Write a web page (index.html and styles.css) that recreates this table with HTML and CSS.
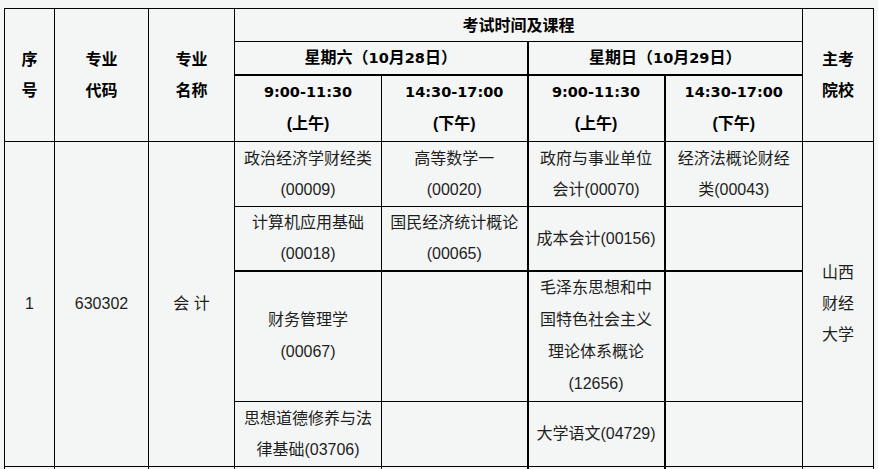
FILE: index.html
```html
<!DOCTYPE html>
<html lang="zh-CN">
<head>
<meta charset="utf-8">
<title>考试时间及课程</title>
<link rel="stylesheet" href="styles.css">
</head>
<body>
<table class="exam">
  <colgroup>
    <col class="c1"><col class="c2"><col class="c3"><col class="c4"><col class="c5"><col class="c6"><col class="c7"><col class="c8">
  </colgroup>
  <thead>
    <tr class="h1">
      <th rowspan="3">序<br>号</th>
      <th rowspan="3">专业<br>代码</th>
      <th rowspan="3">专业<br>名称</th>
      <th colspan="4">考试时间及课程</th>
      <th rowspan="3">主考<br>院校</th>
    </tr>
    <tr class="h2">
      <th colspan="2" class="tb tr">星期六（<span class="num">10</span>月<span class="num">28</span>日）</th>
      <th colspan="2" class="tb">星期日（<span class="num">10</span>月<span class="num">29</span>日）</th>
    </tr>
    <tr class="h3">
      <th><span class="num">9:00-11:30</span><br>(上午)</th>
      <th class="tr"><span class="num">14:30-17:00</span><br>(下午)</th>
      <th class="tr"><span class="num">9:00-11:30</span><br>(上午)</th>
      <th><span class="num">14:30-17:00</span><br>(下午)</th>
    </tr>
  </thead>
  <tbody>
    <tr class="ra">
      <td rowspan="4">1</td>
      <td rowspan="4">630302</td>
      <td rowspan="4">会 计</td>
      <td>政治经济学财经类<br>(00009)</td>
      <td class="tr">高等数学一<br>(00020)</td>
      <td class="tr">政府与事业单位<br>会计(00070)</td>
      <td>经济法概论财经<br>类(00043)</td>
      <td rowspan="4">山西<br>财经<br>大学</td>
    </tr>
    <tr class="rb">
      <td class="tb">计算机应用基础<br>(00018)</td>
      <td class="tb tr">国民经济统计概论<br>(00065)</td>
      <td class="tb tr">成本会计(00156)</td>
      <td class="tb"></td>
    </tr>
    <tr class="rc">
      <td>财务管理学<br>(00067)</td>
      <td class="tr"></td>
      <td class="tr">毛泽东思想和中<br>国特色社会主义<br>理论体系概论<br>(12656)</td>
      <td></td>
    </tr>
    <tr class="rd">
      <td>思想道德修养与法<br>律基础(03706)</td>
      <td class="tr"></td>
      <td class="tr">大学语文(04729)</td>
      <td></td>
    </tr>
    <tr class="re">
      <td></td><td></td><td></td><td></td><td class="tr"></td><td class="tr"></td><td></td><td></td>
    </tr>
  </tbody>
</table>
</body>
</html>
```

FILE: styles.css
```css
html, body {
  margin: 0;
  padding: 0;
  background: #f4f6f5;
}

body {
  padding: 8px 0 0 4px;
  font-family: "Liberation Sans", "Noto Sans CJK SC", sans-serif;
  font-size: 16px;
  color: #1e1e1e;
}

.exam {
  border-collapse: collapse;
  table-layout: fixed;
  width: 869px;
}

.c1 { width: 50px; }
.c2 { width: 94px; }
.c3 { width: 86px; }
.c4 { width: 147px; }
.c5 { width: 146px; }
.c6 { width: 137px; }
.c7 { width: 138px; }
.c8 { width: 71px; }

.exam th,
.exam td {
  border: 1px solid #000;
  padding: 0;
  text-align: center;
  vertical-align: middle;
  line-height: 31px;
  overflow: hidden;
}

.exam th {
  font-weight: bold;
  color: #000;
}

.exam .num {
  font-family: "DejaVu Sans", "Liberation Sans", sans-serif;
  font-size: 14.5px;
}

.exam .h3 th {
  line-height: 32px;
}

.exam .tb {
  border-bottom-width: 2px;
}

.exam .tr {
  border-right-width: 2px;
}

.h1 { height: 33px; }
.h2 { height: 33px; }
.h3 { height: 66px; }
.ra { height: 65px; }
.rb { height: 65px; }
.rc { height: 130px; }
.rd { height: 65px; }
.re { height: 30px; }

.rc td { line-height: 32px; }
```
